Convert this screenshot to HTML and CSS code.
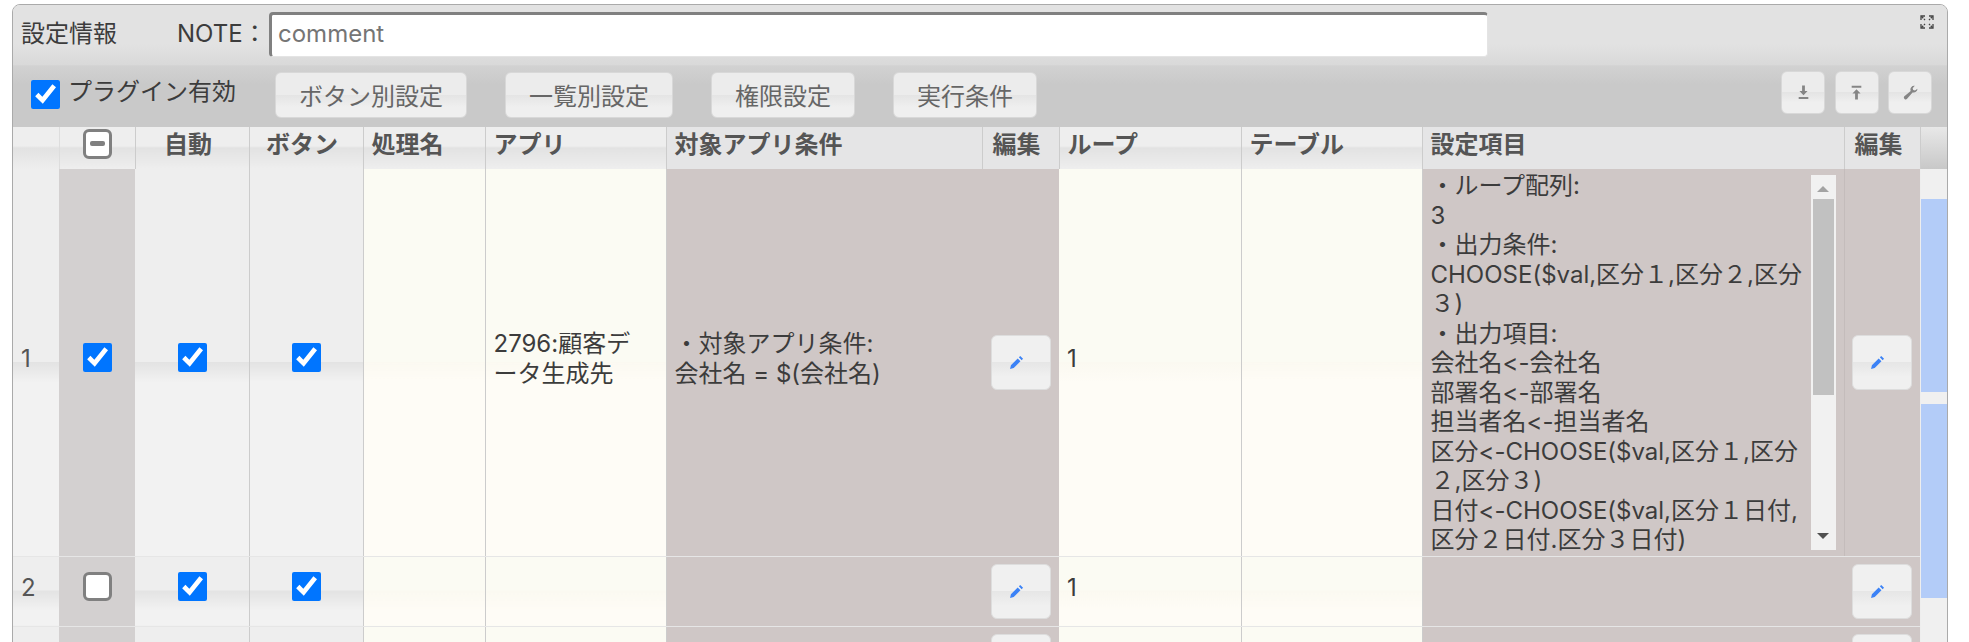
FILE: index.html
```html
<!DOCTYPE html>
<html lang="ja">
<head>
<meta charset="utf-8">
<title>設定情報</title>
<link rel="stylesheet" href="styles.css">
</head>
<body>
<div class="panel">
  <header class="panel-head">
    <span class="panel-title">設定情報</span>
    <label class="note-label">NOTE：</label>
    <input class="note-input" type="text" placeholder="comment">
    <svg class="expand" viewBox="0 0 14 14"><g fill="none" stroke="#444" stroke-width="1.3"><path d="M1 5V1h4M9 1h4v4M13 9v4H9M5 13H1V9"/><path d="M1.5 1.5l3.5 3.5M12.5 1.5L9 5M12.5 12.5L9 9M1.5 12.5L5 9" stroke-dasharray="2.5 1"/></g></svg>
  </header>
  <div class="toolbar">
    <label class="plugin"><input class="check" type="checkbox" checked><span>プラグイン有効</span></label>
    <div class="tool-buttons">
      <button class="btn btn-a">ボタン別設定</button>
      <button class="btn btn-b">一覧別設定</button>
      <button class="btn btn-c">権限設定</button>
      <button class="btn btn-c">実行条件</button>
    </div>
    <div class="icon-buttons">
      <button class="icon-btn"><svg viewBox="0 0 14 14"><path d="M5.700 .5h2.600v5h2.500L7 9.500 3.200 5.500h2.500zM2.500 11.300h9v1.700h-9z" fill="#858585"/></svg></button>
      <button class="icon-btn"><svg viewBox="0 0 14 14"><path d="M2.500 .8h9v1.700h-9zM7 4l3.800 4H8.300v5.500H5.700V8H3.200z" fill="#858585"/></svg></button>
      <button class="icon-btn"><svg viewBox="0 0 14 14"><path d="M13.500 3.500a3.500 3.500 0 0 1-4.600 3.400L3.800 12.800a1.600 1.600 0 0 1-2.500-2.200l5.900-5A3.500 3.500 0 0 1 11 .8L9 3l.5 1.700 1.700.4z" fill="#858585"/></svg></button>
    </div>
  </div>
  <div class="content">
    <table class="grid">
      <colgroup>
        <col class="c-idx"><col class="c-sel"><col class="c-flag"><col class="c-flag">
        <col class="c-name"><col class="c-app"><col class="c-cond"><col class="c-edit">
        <col class="c-loop"><col class="c-tbl"><col class="c-items"><col class="c-edit2">
      </colgroup>
      <thead>
        <tr>
          <th></th>
          <th class="center"><span class="minus-box"></span></th>
          <th class="center">自動</th>
          <th class="center">ボタン</th>
          <th>処理名</th>
          <th>アプリ</th>
          <th class="flat">対象アプリ条件</th>
          <th class="flat th-edit">編集</th>
          <th>ループ</th>
          <th>テーブル</th>
          <th class="flat">設定項目</th>
          <th class="flat th-edit">編集</th>
        </tr>
      </thead>
      <tbody>
        <tr class="row-tall">
          <td class="idx">1</td>
          <td class="sel center"><input class="check" type="checkbox" checked></td>
          <td class="center"><input class="check" type="checkbox" checked></td>
          <td class="center"><input class="check" type="checkbox" checked></td>
          <td class="cream"></td>
          <td class="cream">2796:顧客デ<br>ータ生成先</td>
          <td class="brown">・対象アプリ条件:<br>会社名 = $(会社名)</td>
          <td class="brown edit-cell"><button class="edit-btn"><svg viewBox="0 0 14 14"><path d="M1 13l.8-3.400 6.300-6.300 2.600 2.600-6.300 6.300zM9.200 2.200l1.300-1.300 2.600 2.600-1.300 1.300z" fill="#3b82f6"/></svg></button></td>
          <td class="cream">1</td>
          <td class="cream"></td>
          <td class="brown items">
            <div class="scroll-box">
              <div class="scroll-text">・ループ配列:<br>3<br>・出力条件:<br>CHOOSE($val,区分１,区分２,区分<br>３)<br>・出力項目:<br>会社名&lt;-会社名<br>部署名&lt;-部署名<br>担当者名&lt;-担当者名<br>区分&lt;-CHOOSE($val,区分１,区分<br>２,区分３)<br>日付&lt;-CHOOSE($val,区分１日付,<br>区分２日付.区分３日付)</div>
              <div class="scrollbar">
                <span class="arrow-up"></span>
                <span class="thumb"></span>
                <span class="arrow-down"></span>
              </div>
            </div>
          </td>
          <td class="brown edit-cell"><button class="edit-btn"><svg viewBox="0 0 14 14"><path d="M1 13l.8-3.400 6.300-6.300 2.600 2.600-6.300 6.300zM9.200 2.200l1.300-1.300 2.600 2.600-1.300 1.300z" fill="#3b82f6"/></svg></button></td>
        </tr>
        <tr class="row-std">
          <td class="idx">2</td>
          <td class="sel center"><input class="check check-off" type="checkbox"></td>
          <td class="center"><input class="check" type="checkbox" checked></td>
          <td class="center"><input class="check" type="checkbox" checked></td>
          <td class="cream"></td>
          <td class="cream"></td>
          <td class="brown"></td>
          <td class="brown edit-cell"><button class="edit-btn"><svg viewBox="0 0 14 14"><path d="M1 13l.8-3.400 6.300-6.300 2.600 2.600-6.300 6.300zM9.200 2.200l1.300-1.300 2.600 2.600-1.300 1.300z" fill="#3b82f6"/></svg></button></td>
          <td class="cream">1</td>
          <td class="cream"></td>
          <td class="brown"></td>
          <td class="brown edit-cell"><button class="edit-btn"><svg viewBox="0 0 14 14"><path d="M1 13l.8-3.400 6.300-6.300 2.600 2.600-6.300 6.300zM9.200 2.200l1.300-1.300 2.600 2.600-1.300 1.300z" fill="#3b82f6"/></svg></button></td>
        </tr>
        <tr class="row-std">
          <td class="idx"></td>
          <td class="sel center"></td>
          <td class="center"></td>
          <td class="center"></td>
          <td class="cream"></td>
          <td class="cream"></td>
          <td class="brown"></td>
          <td class="brown edit-cell"><button class="edit-btn"></button></td>
          <td class="cream"></td>
          <td class="cream"></td>
          <td class="brown"></td>
          <td class="brown edit-cell"><button class="edit-btn"></button></td>
        </tr>
      </tbody>
    </table>
    <aside class="gutter">
      <div class="gutter-head"></div>
      <div class="gutter-gap-top"></div>
      <div class="mark mark-a"></div>
      <div class="gutter-gap"></div>
      <div class="mark mark-b"></div>
    </aside>
  </div>
</div>
</body>
</html>
```

FILE: styles.css
```css
* { box-sizing: border-box; }
html, body { margin: 0; height: 642px; overflow: hidden; background: #fff; }
body {
  padding: 4px 21px 0 12px;
  font-family: Inter, "Noto Sans CJK JP", sans-serif;
  font-size: 24px;
  line-height: 29.500px;
  color: #3c3c3c;
  font-variant-ligatures: none;
  font-feature-settings: "calt" 0, "liga" 0;
}
.panel {
  height: 700px;
  border: 1px solid #aaa;
  border-radius: 8px 8px 0 0;
  overflow: hidden;
  background: #eee;
}
.panel-head {
  height: 61px;
  display: flex;
  align-items: center;
  padding: 0 13px 0 8px;
  background: linear-gradient(#e2e2e2 65%, #d9d9d9);
  border-bottom: 1px solid #d4d4d4;
}
.panel-title { width: 156px; margin-bottom: 2px; }
.note-label { width: 92px; margin-bottom: 2px; }
.note-input {
  width: 1219px;
  height: 45px;
  margin-top: -2px;
  padding: 0 6px 3px;
  border-style: solid;
  border-width: 3px 1px 1px 3px;
  border-color: #808080 #e4e4e4 #e4e4e4 #808080;
  border-radius: 4px;
  background: #fff;
  font: inherit;
  outline: none;
}
.note-input::placeholder { color: #757575; opacity: 1; }
.expand { width: 14px; height: 14px; margin-left: auto; margin-top: -26px; }
.toolbar {
  height: 61px;
  display: flex;
  align-items: flex-start;
  padding-left: 18px;
  background: linear-gradient(#d2d2d2, #c9c9c9 30%);
}
.plugin { display: flex; align-items: center; gap: 8px; width: 244px; margin-top: 14px; }
.plugin span { margin-top: -6px; white-space: nowrap; }
.tool-buttons { display: flex; gap: 38px; margin-top: 6px; }
.btn {
  height: 46px;
  padding: 3px 0 0;
  border: 1px solid #d8d8d8;
  border-radius: 6px;
  background: linear-gradient(#ececec 50%, #e4e4e4 50%, #efefef calc(50% + 12px));
  color: #666;
  font: inherit;
}
.btn-a { width: 192px; }
.btn-b { width: 168px; }
.btn-c { width: 144px; }
.icon-buttons { display: flex; gap: 9.500px; margin-left: auto; margin-top: 5px; margin-right: 15px; }
.icon-btn {
  width: 44px;
  height: 43px;
  padding: 0;
  display: flex;
  align-items: center;
  justify-content: center;
  border: 1px solid #d8d8d8;
  border-radius: 6px;
  background: linear-gradient(#ececec 50%, #e4e4e4 50%, #efefef calc(50% + 10px));
}
.icon-btn svg { width: 15px; height: 15px; }
.content { display: flex; align-items: flex-start; }
.grid {
  width: 1907px;
  flex: none;
  table-layout: fixed;
  border-collapse: collapse;
}
.c-idx { width: 46px; }
.c-sel { width: 76px; }
.c-flag { width: 114px; }
.c-name { width: 122px; }
.c-app { width: 181px; }
.c-cond { width: 316px; }
.c-edit { width: 77px; }
.c-loop { width: 182px; }
.c-tbl { width: 181px; }
.c-items { width: 422px; }
.c-edit2 { width: 76px; }
th {
  height: 42px;
  padding: 0 8px 7px;
  text-align: left;
  font-weight: 700;
  color: #555;
  white-space: nowrap;
  border-right: 1px solid #ccc;
  background: linear-gradient(#eee 45%, #e2e2e2 50%, #eee);
}
th.flat { background: #e5e5e6; }
th.th-edit { padding-left: 10px; }
th:first-child { border-right: 1px solid #ddd; }
th.center { text-align: center; padding-right: 16px; padding-left: 8px; }
th:nth-child(2) { padding: 0 0 9px 1px; }
.minus-box {
  display: inline-block;
  position: relative;
  width: 29px;
  height: 30px;
  vertical-align: middle;
  background: #fff;
  border: 3px solid #808080;
  border-radius: 6px;
}
.minus-box::after {
  content: "";
  position: absolute;
  left: 4px;
  right: 4px;
  top: 9px;
  height: 5px;
  border-radius: 2px;
  background: #808080;
}
td {
  padding: 0 8px 7px;
  vertical-align: middle;
  border-right: 1px solid #ccc;
  border-bottom: 1px solid #e6e6e6;
  background: linear-gradient(#eee 50%, #e3e3e3 50%, #f2f2f2 calc(50% + 20px));
}
.row-tall td { height: 387px; }
.row-std td { height: 70px; }
td.idx { border-right: 0; color: #555; }
td.center { text-align: center; padding-left: 1px; padding-right: 0; }
td.edit-cell { text-align: center; padding: 0; }
td.sel { background: #d3d0d0; border-right: 0; }
td.cream { background: linear-gradient(#fbfbf3 50%, #fbf9f1 50%, #fefcf6 calc(50% + 20px)); }
td.brown { background: #cfc7c6; border-right: 0; }
td.items { padding: 6px 9px 5px 8px; vertical-align: top; border-right: 1px solid #c4bcbb; }
.check {
  width: 29px;
  height: 29px;
  margin: 0;
  vertical-align: middle;
  accent-color: #0075ff;
}
td .check { margin-bottom: 3px; }
.check-off {
  appearance: none;
  background: #fff;
  border: 3px solid #808080;
  border-radius: 6px;
}
.edit-btn {
  width: 60px;
  height: 55px;
  padding: 0;
  display: inline-flex;
  align-items: center;
  justify-content: center;
  vertical-align: middle;
  border: 1px solid #ddd;
  border-radius: 6px;
  background: linear-gradient(#f0f0f0 50%, #e6e6e6 50%, #f0f0f0 calc(50% + 14px));
}
.edit-btn svg { width: 15px; height: 15px; margin-right: 9px; }
.scroll-box { display: flex; height: 375px; }
.scroll-text {
  width: 380px;
  height: 384px;
  margin-top: -4px;
  flex: none;
  overflow: hidden;
  white-space: nowrap;
}
.scrollbar {
  width: 25px;
  height: 375px;
  flex: none;
  display: flex;
  flex-direction: column;
  align-items: center;
  background: #f1f1f1;
}
.arrow-up {
  width: 0;
  height: 0;
  margin: 11px 0 7px;
  border: 6px solid transparent;
  border-top: 0;
  border-bottom: 6px solid #a3a3a3;
}
.thumb { width: 21px; height: 196px; background: #c1c1c1; }
.arrow-down {
  width: 0;
  height: 0;
  margin-top: auto;
  margin-bottom: 11px;
  border: 6px solid transparent;
  border-bottom: 0;
  border-top: 6px solid #505050;
}
.gutter { width: 27px; flex: none; background: #f0f0f0; height: 520px; }
.gutter-head { height: 42px; background: linear-gradient(#e8e8e8, #c8c8c8); }
.gutter-gap-top { height: 30px; }
.mark { background: #b3ccf8; }
.mark-a { height: 193px; }
.gutter-gap { height: 12px; }
.mark-b { height: 194px; }
```
